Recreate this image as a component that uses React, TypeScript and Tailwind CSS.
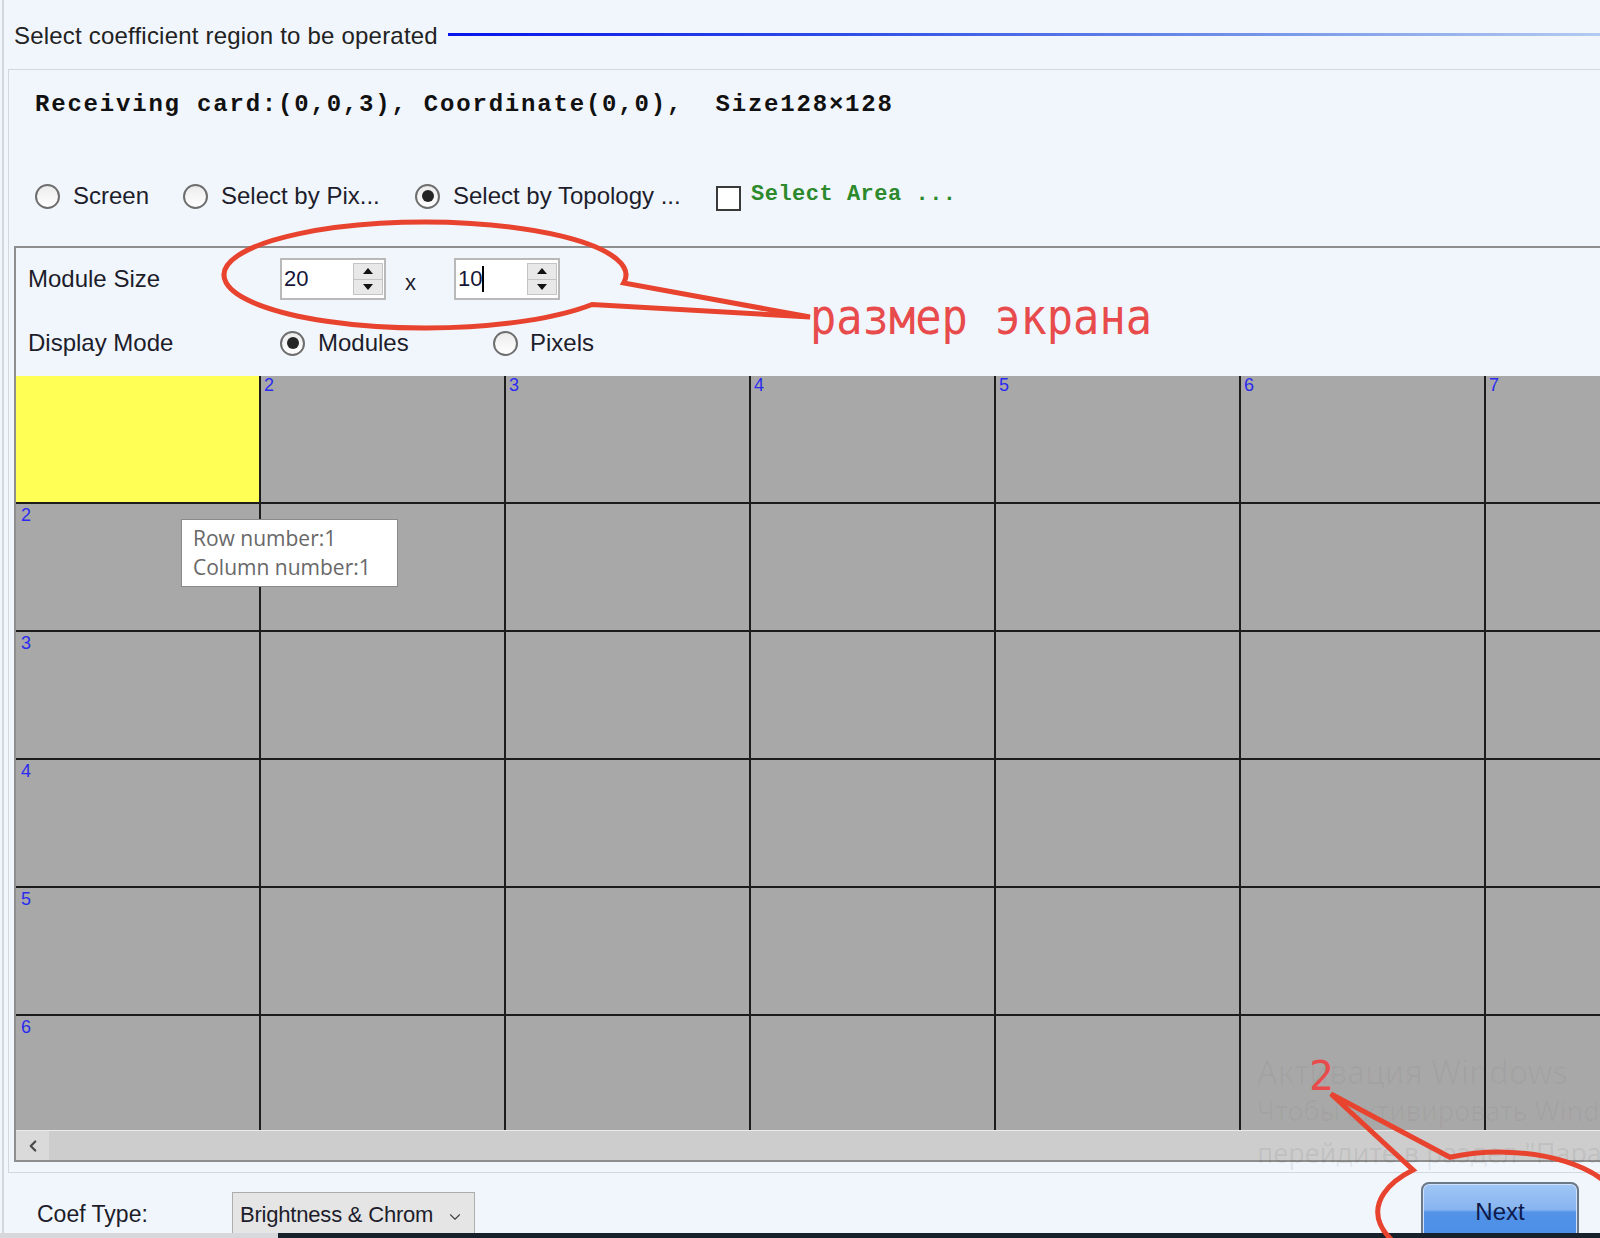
import { ChevronLeft, ChevronDown } from "lucide-react";

const GRID_COLS = 7;
const GRID_ROWS = 6;

function Radio({ checked }: { checked?: boolean }) {
  return (
    <span className="flex h-[25px] w-[25px] shrink-0 items-center justify-center rounded-full border-2 border-[#6e6e6e] bg-[linear-gradient(#ececec,#ffffff)]">
      {checked && <span className="h-[12px] w-[12px] rounded-full bg-[#252525]" />}
    </span>
  );
}

function Arrow({ up }: { up?: boolean }) {
  return (
    <svg width="10" height="6" viewBox="0 0 10 6">
      <path d={up ? "M0 6 L5 0 L10 6 Z" : "M0 0 L5 6 L10 0 Z"} fill="#111" />
    </svg>
  );
}

function SpinBox({ value, caret }: { value: string; caret?: boolean }) {
  return (
    <div className="flex h-[42px] w-[106px] shrink-0 items-center border-2 border-[#b9b9b9] bg-white pl-[2px] pr-[1px]">
      <div className="flex flex-1 items-center text-[22px] leading-[26px] text-[#16163a]">
        {value}
        {caret && <span className="h-[26px] w-[2px] bg-black" />}
      </div>
      <div className="flex h-[32px] w-[30px] flex-col border border-[#c4c4c4] bg-[#e8e8e8]">
        <div className="flex flex-1 items-center justify-center border-b border-[#c4c4c4]">
          <Arrow up />
        </div>
        <div className="flex flex-1 items-center justify-center">
          <Arrow />
        </div>
      </div>
    </div>
  );
}

function GridCell({ r, c }: { r: number; c: number }) {
  const selected = r === 0 && c === 0;
  return (
    <div
      className={`border-r-2 border-b-2 border-[#1c1c1c] ${selected ? "bg-[#ffff55]" : "bg-[#a8a8a8]"}`}
    >
      {r === 0 && c > 0 && (
        <span className="block pl-[3px] text-[18px] leading-[18px] text-[#2b2bf0]">{c + 1}</span>
      )}
      {c === 0 && r > 0 && (
        <span className="block pl-[5px] pt-[2px] text-[18px] leading-[18px] text-[#2b2bf0]">{r + 1}</span>
      )}
    </div>
  );
}

export default function App() {
  const cells = [];
  for (let r = 0; r < GRID_ROWS; r++) {
    for (let c = 0; c < GRID_COLS; c++) {
      cells.push(<GridCell key={`${r}-${c}`} r={r} c={c} />);
    }
  }

  return (
    <div className="relative flex h-[1238px] w-[1600px] flex-col overflow-hidden bg-[#f1f6fd] font-['Liberation_Sans',Arial,sans-serif] text-[#1d1d2b]">
      <div className="flex h-[1233px] flex-col overflow-hidden">
        <div className="ml-[2px] flex h-full flex-col border-l-2 border-[#d4d8dd]">
          {/* section header with rule */}
          <div className="flex h-[69px] items-start pl-[10px] pt-[22px]">
            <span className="shrink-0 text-[24px] leading-[28px] tracking-[0.2px] text-[#222]">
              Select coefficient region to be operated
            </span>
            <div className="ml-[10px] mt-[11px] h-[3px] flex-1 bg-[linear-gradient(90deg,#0814ea,#2f4fe6_35%,#7f9ee9_75%,#b4caf0)]" />
          </div>

          {/* main panel */}
          <div className="ml-[4px] flex w-[1700px] flex-col border border-[#d3d8de] pb-[10px]">
            <div className="flex h-[66px] items-center pl-[26px] pt-[4px]">
              <span className="whitespace-pre font-['Liberation_Mono',monospace] text-[24px] font-bold leading-[28px] tracking-[1.8px] text-[#111]">
                Receiving card:(0,0,3), Coordinate(0,0),  Size128×128
              </span>
            </div>

            <div className="flex h-[110px] items-start pl-[26px] pt-[46px]">
              <div className="flex w-[148px] items-center">
                <Radio />
                <span className="ml-[13px] text-[24px] leading-[28px]">Screen</span>
              </div>
              <div className="flex w-[232px] items-center">
                <Radio />
                <span className="ml-[13px] text-[24px] leading-[28px]">Select by Pix...</span>
              </div>
              <div className="flex w-[301px] items-center">
                <Radio checked />
                <span className="ml-[13px] text-[24px] leading-[28px]">Select by Topology ...</span>
              </div>
              <div className="flex items-center">
                <span className="h-[25px] w-[25px] border-2 border-[#3a3a3a] bg-white" />
                <span className="ml-[10px] whitespace-pre pb-[7px] font-['Liberation_Mono',monospace] text-[22px] font-bold leading-[26px] tracking-[0.5px] text-[#2c8a2c]">
                  Select Area ...
                </span>
              </div>
            </div>

            {/* topology group */}
            <div className="ml-[5px] flex flex-col border-2 border-[#8e8e8e]">
              <div className="flex h-[62px] items-center pl-[12px]">
                <span className="w-[252px] text-[24px] leading-[28px]">Module Size</span>
                <SpinBox value="20" />
                <span className="w-[68px] pl-[19px] pt-[8px] text-[22px] leading-[26px]">x</span>
                <SpinBox value="10" caret />
              </div>
              <div className="flex h-[66px] items-center pl-[12px]">
                <span className="w-[252px] text-[24px] leading-[28px]">Display Mode</span>
                <div className="flex w-[213px] items-center">
                  <Radio checked />
                  <span className="ml-[13px] text-[24px] leading-[28px]">Modules</span>
                </div>
                <div className="flex items-center">
                  <Radio />
                  <span className="ml-[12px] text-[24px] leading-[28px]">Pixels</span>
                </div>
              </div>

              <div className="grid h-[754px] auto-rows-[128px] grid-cols-[repeat(7,245px)] overflow-hidden">
                {cells}
              </div>

              <div className="flex h-[30px] border-t border-[#ebebeb] bg-[#cdcdcd]">
                <div className="flex w-[33px] items-center justify-center bg-[#dadada]">
                  <ChevronLeft size={18} strokeWidth={3} color="#4a4a4a" />
                </div>
              </div>
            </div>
          </div>

          {/* footer controls */}
          <div className="flex h-[60px] items-start">
            <span className="ml-[33px] mt-[27px] w-[195px] text-[23px] leading-[28px]">Coef Type:</span>
            <div className="mt-[19px] flex h-[50px] w-[243px] items-start border border-[#adadad] bg-[#e5e5e5] pl-[7px] pt-[9px]">
              <span className="text-[22px] leading-[26px] tracking-[-0.2px]">Brightness &amp; Chrom</span>
              <ChevronDown className="ml-auto mr-[10px] mt-[6px]" size={18} strokeWidth={1.5} color="#444" />
            </div>
            <div className="ml-auto mr-[21px] mt-[9px] flex h-[60px] w-[158px] justify-center rounded-t-[8px] border-2 border-[#6b7886] bg-[linear-gradient(#a0c6f6,#87b4ef_46%,#5394e9_50%,#4a8be6)] pt-[14px] shadow-[inset_0_0_0_1px_#cfe2fb]">
              <span className="text-[24px] leading-[28px] text-[#0e1a4a]">Next</span>
            </div>
          </div>
        </div>
      </div>
      <div className="flex h-[5px]">
        <div className="w-[278px] bg-[#d6d8db]" />
        <div className="flex-1 bg-[#17212b]" />
      </div>

      {/* hover tooltip over the grid */}
      <div className="absolute left-[181px] top-[519px] flex h-[68px] w-[217px] flex-col justify-center border border-[#8a8a8a] bg-white pl-[11px] font-['Open_Sans',sans-serif] text-[21px] leading-[29px] text-[#686868]">
        <span>Row number:1</span>
        <span>Column number:1</span>
      </div>

      {/* system watermark */}
      <div className="pointer-events-none absolute left-[1257px] top-[1052px] whitespace-nowrap font-['Noto_Sans',sans-serif] text-black/[0.03]">
        <div className="text-[32px] leading-[40px]">Активация Windows</div>
        <div className="text-[27px] leading-[38px]">Чтобы активировать Windows,</div>
        <div className="mt-[8px] text-[27px] leading-[30px] text-black/[0.07]">перейдите в раздел "Параметры".</div>
      </div>

      {/* red markup callouts */}
      <svg className="pointer-events-none absolute left-0 top-0" width="1600" height="1238" viewBox="0 0 1600 1238">
        <path
          d="M 592 304.5 A 201 53 0 1 1 623.7 283 L 810 317 Z"
          fill="none"
          stroke="#e8432e"
          strokeWidth="5"
          strokeLinejoin="miter"
        />
        <text
          x="810"
          y="334"
          fontFamily="'DejaVu Sans Mono', monospace"
          fontSize="50"
          fill="#e84b4b"
          textLength="342"
          lengthAdjust="spacingAndGlyphs"
        >
          размер экрана
        </text>
        <path
          d="M 1450 1157.3 A 122 60 0 1 1 1413 1169.9 L 1331 1094 Z"
          fill="none"
          stroke="#e8432e"
          strokeWidth="5"
        />
        <text x="1309" y="1090" fontFamily="'DejaVu Sans Mono', monospace" fontSize="41" fill="#e84b4b">
          2
        </text>
      </svg>
    </div>
  );
}
